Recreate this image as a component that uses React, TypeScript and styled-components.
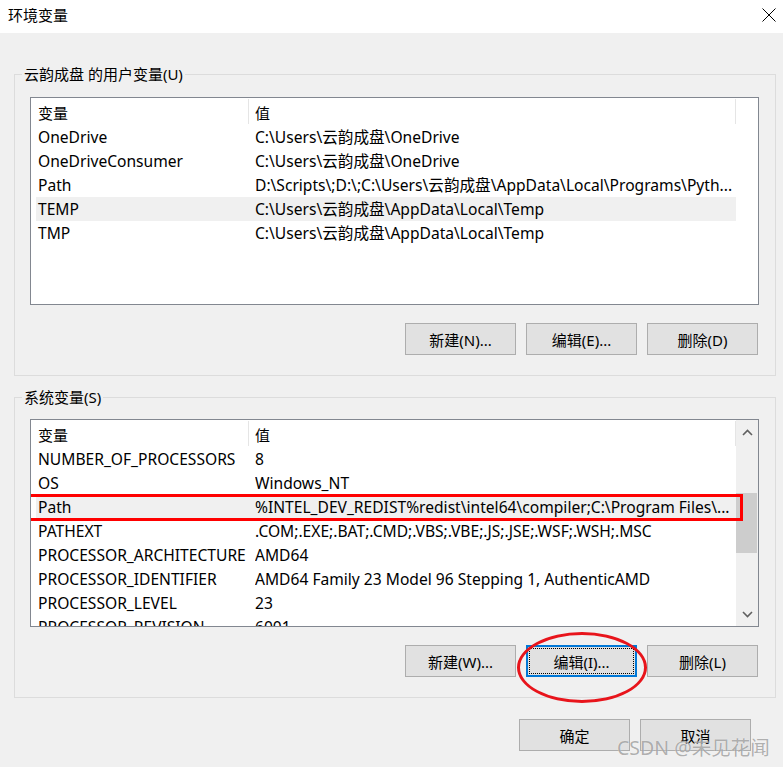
import React from 'react';
import styled, { createGlobalStyle } from 'styled-components';

const GlobalStyle = createGlobalStyle`
  html, body { margin: 0; padding: 0; }
  body {
    width: 783px;
    height: 767px;
    overflow: hidden;
    background: #f0f0f0;
    font-family: "Noto Sans", "Noto Sans CJK SC", sans-serif;
    font-size: 15px;
    color: #000;
  }
  * { box-sizing: border-box; }
`;

const Window = styled.div`
  position: relative;
  width: 783px;
  height: 767px;
  display: flex;
  flex-direction: column;
  background: #f0f0f0;
`;

const TitleBar = styled.div`
  height: 33px;
  background: #fff;
  display: flex;
  align-items: flex-start;
  justify-content: space-between;
  padding: 5px 7px 0 8px;
`;

const Title = styled.div`
  font-family: "Noto Sans CJK SC", sans-serif;
  font-size: 15px;
  line-height: 20px;
`;

const CloseIcon = styled.svg`
  margin-top: 3px;
  display: block;
`;

const Body = styled.div`
  display: flex;
  flex-direction: column;
  padding: 0 7px 0 14px;
`;

const Group = styled.fieldset<{ $top: number; $padTop: number }>`
  margin: ${p => p.$top}px 0 0 0;
  border: 1px solid #dcdcdc;
  padding: ${p => p.$padTop}px 16px 20px 15px;
  min-width: 0;
`;

const Legend = styled.legend`
  margin-left: -8px;
  padding: 0 2px;
  font-family: "Noto Sans", "Noto Sans CJK SC", sans-serif;
  font-size: 15px;
  line-height: 20px;
`;

const ListBox = styled.div`
  height: 208px;
  border: 1px solid #828790;
  background: #fff;
  display: flex;
  overflow: hidden;
  font-size: 15.6px;
`;

const ListMain = styled.div`
  flex: 1;
  min-width: 0;
  display: flex;
  flex-direction: column;
`;

const HeaderRow = styled.div`
  display: grid;
  grid-template-columns: 218px 1fr;
  height: 27px;
  flex: none;
`;

const HeaderCell = styled.div<{ $pad: number }>`
  display: flex;
  align-items: center;
  padding: 2px 0 0 ${p => p.$pad}px;
  margin: 1px 0;
  border-right: 1px solid #e5e5e5;
  font-family: "Noto Sans CJK SC", sans-serif;
  font-size: 15px;
`;

const Row = styled.div<{ $selected?: boolean }>`
  position: relative;
  flex: none;
  display: grid;
  grid-template-columns: 219px 1fr;
  height: 24px;
  line-height: 24px;
  margin-left: 5px;
  background: ${p => (p.$selected ? '#f0f0f0' : 'transparent')};
`;

const Cell = styled.div<{ $pad?: number }>`
  padding-left: ${p => p.$pad ?? 0}px;
  white-space: nowrap;
  overflow: hidden;
`;

const RedBox = styled.div`
  position: absolute;
  left: -11px;
  right: -7px;
  top: -1px;
  bottom: -2px;
  border: 3px solid #f00;
  pointer-events: none;
`;

const SideArea = styled.div<{ $scroll?: boolean }>`
  width: 22px;
  flex: none;
  display: flex;
  flex-direction: column;
  background: ${p => (p.$scroll ? '#f0f0f0' : '#fff')};
`;

const ArrowBtn = styled.div`
  height: 24px;
  display: flex;
  align-items: center;
  justify-content: center;
  flex: none;
`;

const Track = styled.div`
  flex: 1;
  padding-top: 49px;
`;

const Thumb = styled.div`
  height: 60px;
  margin-right: 1px;
  background: #cdcdcd;
`;

const ButtonRow = styled.div<{ $top: number }>`
  display: flex;
  justify-content: flex-end;
  gap: 10px;
  margin-top: ${p => p.$top}px;
  padding-right: 1px;
`;

const BtnWrap = styled.div`
  position: relative;
`;

const Button = styled.button<{ $focused?: boolean }>`
  width: 111px;
  height: 32px;
  margin: 0;
  padding: 0;
  background: #e1e1e1;
  border: ${p => (p.$focused ? '2px solid #0078d7' : '1px solid #adadad')};
  outline: ${p => (p.$focused ? '1px dotted #000' : 'none')};
  outline-offset: -4px;
  font-family: "Noto Sans", "Noto Sans CJK SC", sans-serif;
  font-size: 15px;
  color: #000;
  display: flex;
  align-items: center;
  justify-content: center;
`;

const Ellipse = styled.div`
  position: absolute;
  left: -9px;
  top: -13px;
  width: 130px;
  height: 71px;
  border: 3px solid #e8141b;
  border-radius: 50%;
  pointer-events: none;
`;

const Footer = styled.div`
  display: flex;
  justify-content: flex-end;
  gap: 10px;
  margin-top: 21px;
  padding-right: 25px;
`;

const Watermark = styled.div`
  position: absolute;
  left: 617px;
  top: 735px;
  font-family: "Noto Sans", "Noto Sans CJK SC", sans-serif;
  font-size: 19.5px;
  line-height: 26px;
  color: rgba(110, 110, 110, 0.55);
  text-shadow: 0 0 1px rgba(255, 255, 255, 0.8);
  white-space: nowrap;
  pointer-events: none;
`;

type Item = { name: string; value: string; selected?: boolean; marked?: boolean };

const userVars: Item[] = [
  { name: 'OneDrive', value: 'C:\\Users\\云韵成盘\\OneDrive' },
  { name: 'OneDriveConsumer', value: 'C:\\Users\\云韵成盘\\OneDrive' },
  { name: 'Path', value: 'D:\\Scripts\\;D:\\;C:\\Users\\云韵成盘\\AppData\\Local\\Programs\\Pyth...' },
  { name: 'TEMP', value: 'C:\\Users\\云韵成盘\\AppData\\Local\\Temp', selected: true },
  { name: 'TMP', value: 'C:\\Users\\云韵成盘\\AppData\\Local\\Temp' },
];

const sysVars: Item[] = [
  { name: 'NUMBER_OF_PROCESSORS', value: '8' },
  { name: 'OS', value: 'Windows_NT' },
  { name: 'Path', value: '%INTEL_DEV_REDIST%redist\\intel64\\compiler;C:\\Program Files\\...', selected: true, marked: true },
  { name: 'PATHEXT', value: '.COM;.EXE;.BAT;.CMD;.VBS;.VBE;.JS;.JSE;.WSF;.WSH;.MSC' },
  { name: 'PROCESSOR_ARCHITECTURE', value: 'AMD64' },
  { name: 'PROCESSOR_IDENTIFIER', value: 'AMD64 Family 23 Model 96 Stepping 1, AuthenticAMD' },
  { name: 'PROCESSOR_LEVEL', value: '23' },
  { name: 'PROCESSOR_REVISION', value: '6001' },
];

const Chevron = ({ up }: { up?: boolean }) => (
  <svg width="11" height="7" viewBox="0 0 11 7">
    <path
      d={up ? 'M1 6 L5.5 1.5 L10 6' : 'M1 1 L5.5 5.5 L10 1'}
      fill="none"
      stroke="#606060"
      strokeWidth="1.6"
    />
  </svg>
);

const VarList = ({ items, scroll }: { items: Item[]; scroll?: boolean }) => (
  <ListBox>
    <ListMain>
      <HeaderRow>
        <HeaderCell $pad={7}>变量</HeaderCell>
        <HeaderCell $pad={6}>值</HeaderCell>
      </HeaderRow>
      {items.map((it, i) => (
        <Row key={i} $selected={it.selected}>
          <Cell $pad={2}>{it.name}</Cell>
          <Cell>{it.value}</Cell>
          {it.marked && <RedBox />}
        </Row>
      ))}
    </ListMain>
    <SideArea $scroll={scroll}>
      {scroll && (
        <>
          <ArrowBtn>
            <Chevron up />
          </ArrowBtn>
          <Track>
            <Thumb />
          </Track>
          <ArrowBtn>
            <Chevron />
          </ArrowBtn>
        </>
      )}
    </SideArea>
  </ListBox>
);

export default function App() {
  return (
    <Window>
      <GlobalStyle />
      <TitleBar>
        <Title>环境变量</Title>
        <CloseIcon width="14" height="14" viewBox="0 0 14 14">
          <path d="M0.5 0.5 L13.5 13.5 M13.5 0.5 L0.5 13.5" stroke="#000" strokeWidth="1" fill="none" />
        </CloseIcon>
      </TitleBar>
      <Body>
        <Group $top={31} $padTop={13}>
          <Legend>云韵成盘 的用户变量(U)</Legend>
          <VarList items={userVars} />
          <ButtonRow $top={18}>
            <Button>新建(N)...</Button>
            <Button>编辑(E)...</Button>
            <Button>删除(D)</Button>
          </ButtonRow>
        </Group>
        <Group $top={11} $padTop={12}>
          <Legend>系统变量(S)</Legend>
          <VarList items={sysVars} scroll />
          <ButtonRow $top={18}>
            <Button>新建(W)...</Button>
            <BtnWrap>
              <Button $focused>编辑(I)...</Button>
              <Ellipse />
            </BtnWrap>
            <Button>删除(L)</Button>
          </ButtonRow>
        </Group>
        <Footer>
          <Button>确定</Button>
          <Button>取消</Button>
        </Footer>
      </Body>
      <Watermark>CSDN @未见花闻</Watermark>
    </Window>
  );
}
